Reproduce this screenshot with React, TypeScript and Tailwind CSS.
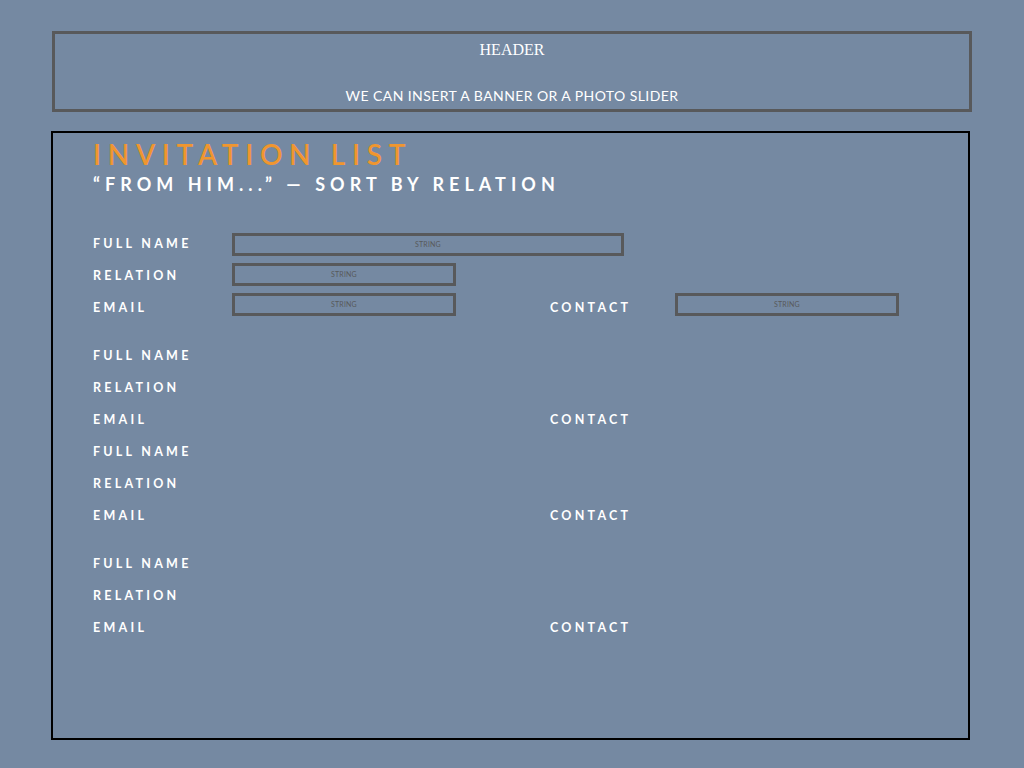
const label = "font-['Lato',sans-serif] font-bold text-[12.5px] tracking-[0.26em] text-white leading-none";

function Field({ w }: { w: string }) {
  return (
    <div className={`${w} h-[23px] border-[3px] border-[#58595b] flex items-center justify-center`}>
      <span className="font-['Lato',sans-serif] text-[7px] text-[#58595b] tracking-wide leading-none">STRING</span>
    </div>
  );
}

function Row({ name }: { name: string }) {
  return (
    <div className="h-8 flex items-center">
      <div className={`${label} w-[139px]`}>{name}</div>
    </div>
  );
}

function EmptyGroup({ className = '' }: { className?: string }) {
  return (
    <div className={className}>
      <Row name="FULL NAME" />
      <Row name="RELATION" />
      <div className="h-8 flex items-center">
        <div className={`${label} w-[457px]`}>EMAIL</div>
        <div className={label}>CONTACT</div>
      </div>
    </div>
  );
}

export default function App() {
  return (
    <div className="min-h-[768px] bg-[#7589a2] pt-[31px] pb-[28px]">
      <header className="ml-[52px] w-[920px] h-[81px] border-[3px] border-[#58595b] flex flex-col items-center">
        <div className="mt-[8px] font-['Liberation_Serif',serif] text-[16px] text-white leading-none">HEADER</div>
        <div className="mt-auto mb-[6px] font-['Lato',sans-serif] text-[14px] text-white tracking-[0.03em] leading-none">
          WE CAN INSERT A BANNER OR A PHOTO SLIDER
        </div>
      </header>

      <main className="mt-[19px] ml-[51px] w-[919px] h-[609px] border-2 border-black pl-[40px] pt-[7px]">
        <h1 className="font-['Lato',sans-serif] font-semibold text-[28px] tracking-[0.238em] text-[#f0962f] leading-none">
          INVITATION LIST
        </h1>
        <h2 className="mt-[7px] font-['Lato',sans-serif] font-bold text-[18px] tracking-[0.28em] text-white leading-none">
          “FROM HIM...” — SORT BY RELATION
        </h2>

        <div className="mt-[35px]">
          <div className="h-8 flex items-center">
            <div className={`${label} w-[139px]`}>FULL NAME</div>
            <Field w="w-[392px]" />
          </div>
          <div className="h-8 flex items-center">
            <div className={`${label} w-[139px]`}>RELATION</div>
            <div className="-mt-[4px]"><Field w="w-[224px]" /></div>
          </div>
          <div className="h-8 flex items-center">
            <div className={`${label} w-[139px]`}>EMAIL</div>
            <div className="-mt-[8px]"><Field w="w-[224px]" /></div>
            <div className={`${label} ml-[94px] w-[125px]`}>CONTACT</div>
            <div className="-mt-[8px]"><Field w="w-[224px]" /></div>
          </div>
        </div>

        <EmptyGroup className="mt-4" />
        <EmptyGroup />
        <EmptyGroup className="mt-4" />
      </main>
    </div>
  );
}
